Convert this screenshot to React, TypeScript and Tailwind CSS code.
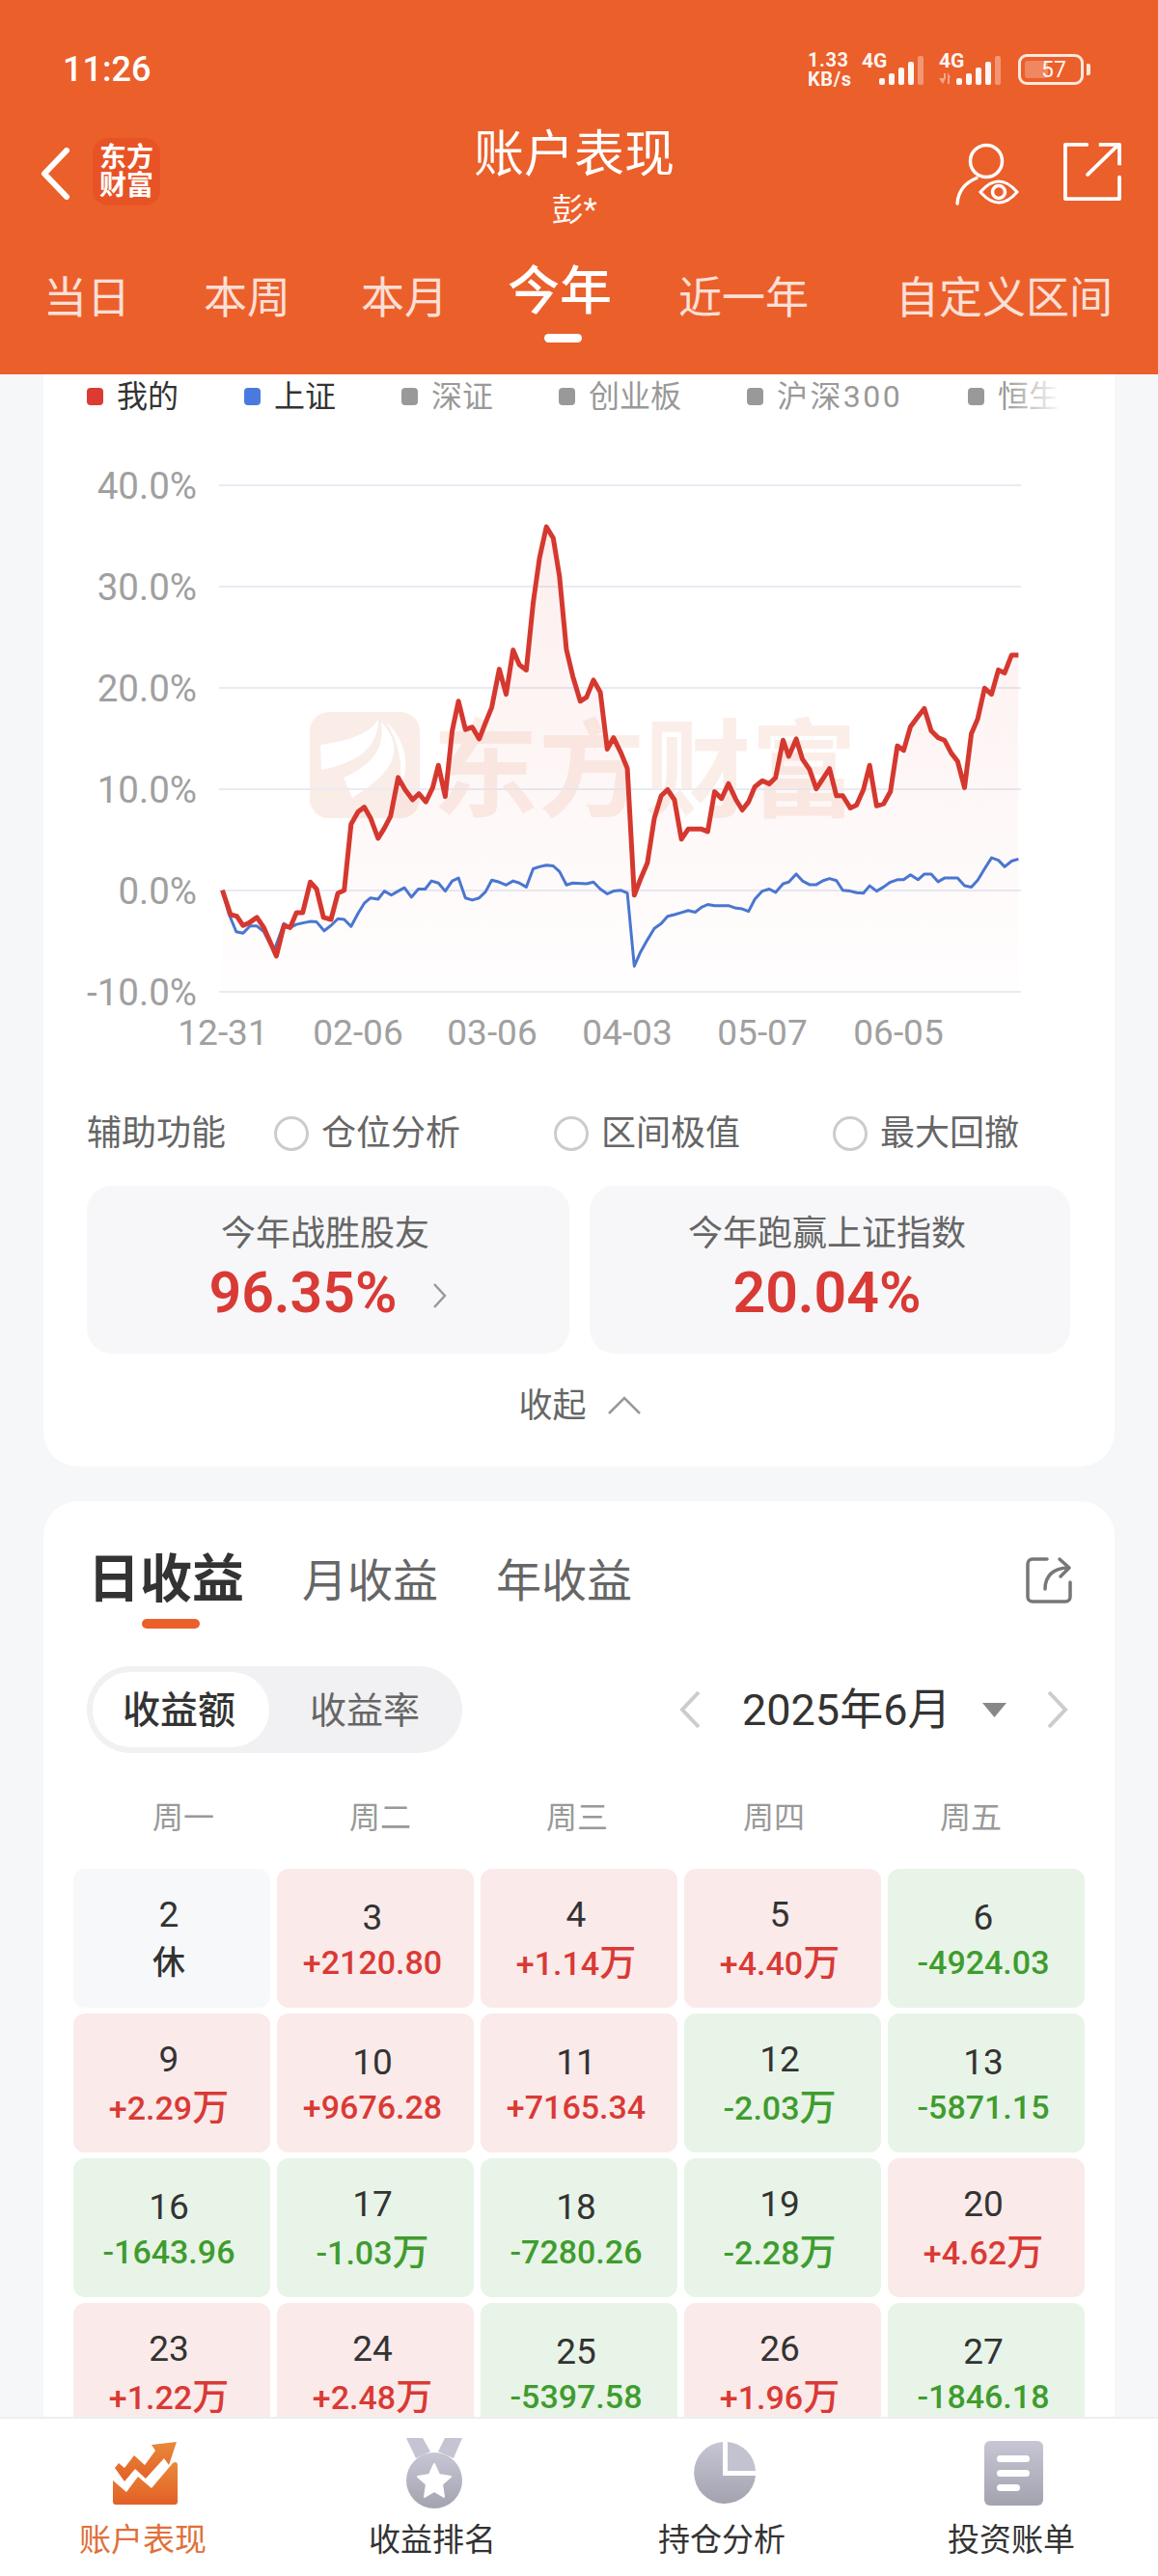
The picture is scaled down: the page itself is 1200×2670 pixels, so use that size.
import React from "react";

const redPts = [[262,1148],[275,1208],[285,1212],[295,1235],[305,1228],[317,1215],[328,1240],[348,1310],[360,1235],[370,1240],[380,1203],[390,1203],[402,1128],[412,1145],[423,1215],[435,1220],[446,1155],[456,1148],[467,985],[478,955],[488,943],[498,970],[510,1020],[520,995],[530,965],[542,870],[553,900],[565,925],[575,910],[586,930],[597,895],[606,840],[617,917],[628,755],[638,682],[649,752],[660,746],[671,775],[681,735],[691,697],[703,603],[714,665],[725,556],[735,592],[746,605],[757,440],[767,330],[778,252],[789,280],[799,375],[810,555],[820,620],[832,682],[842,672],[853,630],[864,660],[875,800],[885,772],[897,810],[907,848],[918,1160],[928,1120],[939,1080],[950,970],[961,915],[971,900],[982,925],[993,1022],[1004,997],[1025,997],[1035,1003],[1046,905],[1057,922],[1068,885],[1080,925],[1090,950],[1100,930],[1110,893],[1122,878],[1133,886],[1143,870],[1155,778],[1164,818],[1176,775],[1186,825],[1197,850],[1208,898],[1229,848],[1240,915],[1250,915],[1262,945],[1272,938],[1283,900],[1293,840],[1304,940],[1315,935],[1326,905],[1337,792],[1347,803],[1358,745],[1370,720],[1380,700],[1391,755],[1402,772],[1412,778],[1423,810],[1433,830],[1444,895],[1455,762],[1465,725],[1476,650],[1487,665],[1498,605],[1508,612],[1519,568],[1530,568]];

const bluePts = [[262,1148],[272,1205],[284,1250],[295,1254],[306,1236],[317,1236],[328,1250],[338,1280],[346,1290],[360,1230],[370,1240],[380,1232],[392,1228],[402,1225],[412,1226],[424,1248],[435,1235],[446,1218],[456,1220],[467,1237],[478,1205],[488,1180],[498,1167],[510,1170],[520,1150],[531,1160],[542,1150],[552,1142],[563,1165],[574,1145],[585,1145],[595,1125],[606,1130],[617,1150],[628,1125],[638,1118],[649,1167],[660,1172],[671,1167],[681,1152],[691,1123],[703,1128],[714,1135],[725,1125],[735,1130],[746,1140],[757,1095],[767,1090],[778,1086],[789,1088],[799,1102],[810,1135],[820,1130],[842,1132],[853,1128],[864,1145],[875,1157],[885,1150],[897,1148],[907,1155],[918,1335],[928,1300],[939,1270],[950,1242],[961,1230],[971,1212],[982,1208],[993,1203],[1004,1198],[1015,1202],[1025,1190],[1035,1183],[1046,1186],[1068,1186],[1080,1192],[1090,1194],[1100,1200],[1110,1170],[1122,1150],[1133,1145],[1143,1153],[1155,1132],[1164,1128],[1176,1108],[1186,1125],[1197,1134],[1208,1134],[1219,1124],[1229,1119],[1240,1124],[1250,1148],[1262,1150],[1272,1154],[1283,1155],[1293,1137],[1304,1150],[1315,1140],[1326,1128],[1337,1122],[1347,1122],[1358,1110],[1370,1122],[1380,1108],[1391,1108],[1402,1127],[1412,1118],[1433,1118],[1444,1137],[1455,1140],[1465,1123],[1476,1095],[1487,1068],[1498,1074],[1508,1090],[1519,1076],[1530,1071]];

// traced points -> page coordinates
const toLine = (pts: number[][]) =>
  pts.map(([x, y]) => `${(60 + x / 1.537).toFixed(1)},${(440 + y / 2.378).toFixed(1)}`).join(" ");

const tabs = [
  { label: "当日", cls: "ml-[45px]" },
  { label: "本周", cls: "ml-[76px]" },
  { label: "本月", cls: "ml-[73px]" },
  { label: "今年", cls: "ml-[62px]", active: true },
  { label: "近一年", cls: "ml-[69px]" },
  { label: "自定义区间", cls: "ml-[90px]" },
];

const legend = [
  { label: "我的", box: "bg-[#dd3a32]", text: "text-[#333]" },
  { label: "上证", box: "bg-[#4a7ae0]", text: "text-[#333]" },
  { label: "深证", box: "bg-[#999]", text: "text-[#999]" },
  { label: "创业板", box: "bg-[#999]", text: "text-[#999]" },
  { label: "沪深300", box: "bg-[#999]", text: "text-[#999] tracking-[2.4px]" },
  { label: "恒生", box: "bg-[#999]", text: "text-[#999]" },
];

const yLabels = [
  { t: "40.0%", y: 503 },
  { t: "30.0%", y: 608 },
  { t: "20.0%", y: 713 },
  { t: "10.0%", y: 818 },
  { t: "0.0%", y: 923 },
  { t: "-10.0%", y: 1028 },
];

const xLabels = [
  { t: "12-31", x: 231 },
  { t: "02-06", x: 371 },
  { t: "03-06", x: 510 },
  { t: "04-03", x: 650 },
  { t: "05-07", x: 790 },
  { t: "06-05", x: 931 },
];

const days = [
  { d: 2, v: "休" }, { d: 3, v: "+2120.80" }, { d: 4, v: "+1.14万" }, { d: 5, v: "+4.40万" }, { d: 6, v: "-4924.03" },
  { d: 9, v: "+2.29万" }, { d: 10, v: "+9676.28" }, { d: 11, v: "+7165.34" }, { d: 12, v: "-2.03万" }, { d: 13, v: "-5871.15" },
  { d: 16, v: "-1643.96" }, { d: 17, v: "-1.03万" }, { d: 18, v: "-7280.26" }, { d: 19, v: "-2.28万" }, { d: 20, v: "+4.62万" },
  { d: 23, v: "+1.22万" }, { d: 24, v: "+2.48万" }, { d: 25, v: "-5397.58" }, { d: 26, v: "+1.96万" }, { d: 27, v: "-1846.18" },
];

function Signal({ arrows }: { arrows?: boolean }) {
  const bars = [
    { x: 18, h: 7 }, { x: 28, h: 12 }, { x: 38, h: 18 }, { x: 48, h: 24 },
  ];
  return (
    <svg width="66" height="44" viewBox="0 -4 66 44" className="block">
      <text x="0" y="16" fontSize="21" fontWeight="700" fill="#fff" fillOpacity="0.95">4G</text>
      {arrows && (
        <g fill="#fff" fillOpacity="0.45">
          <path d="M0 27h5v-5h2v5h-0l-3 6z" />
          <path d="M9 21l3 5h-1v7H9z" />
        </g>
      )}
      {bars.map((b) => (
        <rect key={b.x} x={b.x} y={34 - b.h} width="6" height={b.h} rx="2" fill="#fff" fillOpacity="0.95" />
      ))}
      <rect x="58" y="4" width="6" height="30" rx="2" fill="#fff" fillOpacity="0.35" />
    </svg>
  );
}

function StatusBar() {
  return (
    <div className="flex h-[40px] items-center justify-between mt-[52px] pl-[65px] pr-[70px] text-white">
      <span className="text-[36px] font-medium leading-none">11:26</span>
      <div className="flex items-center">
        <div className="flex w-[56px] flex-col text-[20px] font-bold leading-[20px] tracking-[0.6px] text-white/95">
          <span>1.33</span>
          <span>KB/s</span>
        </div>
        <Signal />
        <div className="ml-[14px]"><Signal arrows /></div>
        <div className="ml-[16px] flex items-center">
          <div className="relative flex h-[32px] w-[68px] items-center justify-center overflow-hidden rounded-[9px] border-[3px] border-white/85">
            <div className="absolute left-[4px] top-[4px] bottom-[4px] w-[24px] rounded-[3px] bg-white/25" />
            <span className="relative pl-[6px] text-[23px] leading-none text-white/95">57</span>
          </div>
          <div className="ml-[3px] h-[12px] w-[4px] rounded-r-[2px] bg-white/85" />
        </div>
      </div>
    </div>
  );
}

function HeaderNav() {
  return (
    <div className="mt-[36px] grid h-[112px] grid-cols-[1fr_auto_1fr] pr-[10px]">
      <div className="flex items-start pt-[15px] pl-[40px]">
        <svg width="34" height="54" viewBox="0 0 34 54" fill="none" className="mt-[10px]">
          <path d="M29 3L6 27l23 24" stroke="#fff" strokeWidth="6" strokeLinecap="round" strokeLinejoin="round" />
        </svg>
        <div className="ml-[22px] flex h-[70px] w-[70px] flex-col items-center justify-center rounded-[16px] bg-[#e85326] text-[28px] font-bold leading-[29px] text-white">
          <span>东方</span>
          <span>财富</span>
        </div>
      </div>
      <div className="flex flex-col items-center pt-[5px] text-white">
        <span className="text-[52px] leading-[56px]">账户表现</span>
        <span className="mt-[9px] text-[33px] leading-[40px] text-white/95">彭*</span>
      </div>
      <div className="flex items-start justify-end pt-[20px] pr-[28px]">
        <svg width="68" height="66" viewBox="0 0 68 66" fill="none" stroke="#fff" strokeWidth="3.5" strokeLinecap="round">
          <circle cx="33" cy="19" r="16.5" />
          <path d="M3 63C4 50 12 41 23 36.500" />
          <path d="M27 51Q46 29 65 51Q46 73 27 51Z" strokeWidth="3" />
          <circle cx="46" cy="51" r="6.500" strokeWidth="3.500" />
        </svg>
        <svg width="60" height="60" viewBox="0 0 62 62" fill="none" stroke="#fff" strokeWidth="4" strokeLinecap="round" strokeLinejoin="round" className="ml-[45px]">
          <path d="M25 2H2V60H60V37" />
          <path d="M26 34L59 2" />
          <path d="M38 2H60V24" strokeLinecap="butt" />
        </svg>
      </div>
    </div>
  );
}

function PeriodTabs() {
  return (
    <div className="mt-[38px] flex h-[64px] items-center whitespace-nowrap">
      {tabs.map((t) =>
        t.active ? (
          <div key={t.label} className={`relative mb-[14px] text-[54px] font-medium leading-[56px] text-white ${t.cls}`}>
            {t.label}
            <div className="absolute left-[38px] top-[71px] h-[9px] w-[39px] rounded-full bg-white" />
          </div>
        ) : (
          <div key={t.label} className={`text-[45px] leading-[56px] text-white/80 ${t.cls}`}>
            {t.label}
          </div>
        )
      )}
    </div>
  );
}

function Legend() {
  return (
    <div className="relative h-[46px] w-[1056px] overflow-hidden pl-[45px]">
      <div className="flex h-full items-center gap-[68px] whitespace-nowrap">
        {legend.map((l) => (
          <div key={l.label} className="flex items-center gap-[14px]">
            <div className={`h-[18px] w-[17px] rounded-[4px] ${l.box}`} />
            <span className={`text-[32px] leading-none ${l.text}`}>{l.label}</span>
          </div>
        ))}
      </div>
      <div className="absolute right-0 top-0 h-full w-[60px] bg-gradient-to-r from-white/0 to-white" />
    </div>
  );
}

function Chart() {
  const red = toLine(redPts);
  const blue = toLine(bluePts);
  return (
    <svg viewBox="45 434 1110 666" className="block h-[666px] w-[1110px]">
      <defs>
        <linearGradient id="areaFill" gradientUnits="userSpaceOnUse" x1="0" y1="540" x2="0" y2="1040">
          <stop offset="0" stopColor="#e2453c" stopOpacity="0.09" />
          <stop offset="1" stopColor="#e2453c" stopOpacity="0.005" />
        </linearGradient>
      </defs>
      {/* watermark */}
      <rect x="321" y="738" width="114" height="110" rx="20" fill="#faece6" />
      <path d="M332 772C360 768 385 760 392 745C392 775 372 790 333 798Z" fill="#fff" />
      <path d="M356 806C380 795 400 780 395 748C420 775 410 800 365 827Z" fill="#fff" />
      <path d="M400 748C422 768 425 795 414 822C418 795 414 770 400 748Z" fill="#fff" />
      <text x="448" y="838" fontSize="110" fontWeight="700" fill="#fbeee8">东方财富</text>

      {yLabels.map((l) => (
        <g key={l.t}>
          <line x1="227" x2="1058" y1={l.y} y2={l.y} stroke="#e9ebf3" strokeWidth="2" />
          <text x="204" y={l.y + 14} textAnchor="end" fontSize="38.5" fill="#a0a0a0">{l.t}</text>
        </g>
      ))}
      {xLabels.map((l) => (
        <text key={l.t} x={l.x} y="1083" textAnchor="middle" fontSize="37" fill="#a0a0a0">{l.t}</text>
      ))}

      <polygon points={`230,1028 ${red} 1055,1028`} fill="url(#areaFill)" />
      <polyline points={blue} fill="none" stroke="#4a76d0" strokeWidth="3" strokeLinejoin="round" />
      <polyline points={red} fill="none" stroke="#d5382f" strokeWidth="5" strokeLinejoin="round" />
    </svg>
  );
}

function Radio({ label, cls }: { label: string; cls: string }) {
  return (
    <div className={`flex items-center ${cls}`}>
      <div className="h-[36px] w-[36px] rounded-full border-[3px] border-[#ccc]" />
      <span className="ml-[13px] text-[36px] leading-none text-[#666]">{label}</span>
    </div>
  );
}

function ChartCard() {
  return (
    <section className="mx-[45px] rounded-b-[36px] bg-white pb-[45px]">
      <Legend />
      <Chart />
      <div className="mt-[57px] mb-[-1px] flex h-[36px] items-center pl-[45px]">
        <span className="text-[36px] leading-none text-[#666]">辅助功能</span>
        <Radio label="仓位分析" cls="ml-[50px]" />
        <Radio label="区间极值" cls="ml-[97px]" />
        <Radio label="最大回撤" cls="ml-[96px]" />
      </div>
      <div className="mt-[37px] flex gap-[21px] pl-[45px]">
        <div className="flex h-[174px] w-[500px] flex-col items-center rounded-[26px] bg-[#f7f7f9] pt-[30px] pr-[6px]">
          <span className="text-[36px] leading-[40px] text-[#666]">今年战胜股友</span>
          <div className="mt-[9px] flex items-center pl-[6px]">
            <span className="text-[59px] font-semibold leading-[64px] text-[#d93a35]">96.35%</span>
            <svg width="16" height="28" viewBox="0 0 16 28" fill="none" className="ml-[36px] mt-[6px]">
              <path d="M2 2l11 12L2 26" stroke="#999" strokeWidth="2.500" />
            </svg>
          </div>
        </div>
        <div className="flex h-[174px] w-[498px] flex-col items-center rounded-[26px] bg-[#f7f7f9] pt-[30px] pr-[6px]">
          <span className="text-[36px] leading-[40px] text-[#666]">今年跑赢上证指数</span>
          <span className="mt-[9px] text-[59px] font-semibold leading-[64px] text-[#d93a35]">20.04%</span>
        </div>
      </div>
      <div className="mt-[36px] flex h-[36px] items-center justify-center pl-[2px]">
        <span className="text-[35px] leading-none text-[#666]">收起</span>
        <svg width="36" height="20" viewBox="0 0 36 20" fill="none" className="ml-[21px]">
          <path d="M2 18L18 2l16 16" stroke="#999" strokeWidth="2.500" />
        </svg>
      </div>
    </section>
  );
}

function DayCell({ d, v }: { d: number; v: string }) {
  const rest = v === "休";
  const up = v.startsWith("+");
  const isWan = v.endsWith("万");
  const high = isWan || rest;
  const bg = rest ? "bg-[#f7f8fa]" : up ? "bg-[#fbeaea]" : "bg-[#e8f4e7]";
  const color = rest ? "text-[#333]" : up ? "text-[#d93a35]" : "text-[#3f9c2f]";
  return (
    <div className={`flex h-[144px] flex-col items-center justify-center rounded-[12px] pr-[6px] ${bg}`}>
      <div className={`h-[40px] text-[37px] text-[#333] ${high ? "pt-[2px] leading-[38px]" : "pt-[8px] leading-[32px]"}`}>{d}</div>
      <div className={`mt-[10px] h-[40px] text-[34px] font-medium leading-[40px] ${color}`}>
        {isWan ? (
          <>
            {v.slice(0, -1)}
            <span className="text-[38px]">万</span>
          </>
        ) : (
          v
        )}
      </div>
    </div>
  );
}

function CalendarCard() {
  return (
    <section className="mx-[45px] mt-[36px] rounded-[36px] bg-white pt-[52px] pb-[40px]">
      <div className="flex h-[60px] items-center pl-[46px] pr-[44px]">
        <span className="text-[54px] font-semibold leading-none text-[#333]">日收益</span>
        <span className="ml-[60px] text-[47px] leading-none text-[#666]">月收益</span>
        <span className="ml-[60px] text-[47px] leading-none text-[#666]">年收益</span>
        <svg width="48" height="50" viewBox="0 0 48 50" fill="none" stroke="#777" strokeWidth="3.500" strokeLinecap="round" strokeLinejoin="round" className="ml-auto">
          <path d="M22 3H7C4 3 2 5 2 8V42C2 45 4 47 7 47H41C44 47 46 45 46 42V27" />
          <path d="M20 34C20 21 28 12 44 12" />
          <path d="M35 3L45 12L36 21" />
        </svg>
      </div>
      <div className="ml-[102px] mt-[10px] h-[10px] w-[60px] rounded-full bg-[#eb5f2b]" />
      <div className="mt-[39px] flex items-center pl-[45px] pr-[40px]">
        <div className="flex h-[90px] w-[389px] items-center rounded-full bg-[#f1f1f3] pl-[6px]">
          <div className="flex h-[78px] w-[183px] items-center justify-center rounded-full bg-white pt-[2px] pr-[4px] text-[39px] font-medium text-[#333]">收益额</div>
          <div className="flex w-[194px] items-center justify-center pt-[2px] pl-[4px] text-[38px] text-[#666]">收益率</div>
        </div>
        <svg width="24" height="40" viewBox="0 0 24 40" fill="none" className="ml-[224px]">
          <path d="M21 2L4 20l17 18" stroke="#ccc" strokeWidth="4" />
        </svg>
        <span className="ml-[42px] text-[45px] leading-none text-[#333]">2025年6月</span>
        <svg width="25" height="15" viewBox="0 0 25 15" className="ml-[33px]">
          <path d="M0 0h25L12.500 15z" fill="#888" />
        </svg>
        <svg width="24" height="40" viewBox="0 0 24 40" fill="none" className="ml-[41px]">
          <path d="M3 2l17 18L3 38" stroke="#ccc" strokeWidth="4" />
        </svg>
      </div>
      <div className="ml-[43px] mt-[48px] grid h-[38px] w-[1020px] grid-cols-5 items-center text-center text-[32px] leading-none text-[#999]">
        <span>周一</span>
        <span>周二</span>
        <span>周三</span>
        <span>周四</span>
        <span>周五</span>
      </div>
      <div className="ml-[31px] mt-[34px] grid w-[1048px] grid-cols-5 gap-x-[7px] gap-y-[6px]">
        {days.map((c) => (
          <DayCell key={c.d} d={c.d} v={c.v} />
        ))}
      </div>
    </section>
  );
}

function NavIconAccount() {
  return (
    <svg width="67" height="66" viewBox="0 0 67 66">
      <defs>
        <linearGradient id="navOrange" x1="0" y1="0" x2="0" y2="1">
          <stop offset="0" stopColor="#e88a3a" />
          <stop offset="1" stopColor="#e35f26" />
        </linearGradient>
      </defs>
      <g fill="url(#navOrange)">
        <path d="M0 40L14 52L26 36L40 48L62 22C65 20 67 21 67 24V62C67 64 66 65 64 65H3C1 65 0 64 0 62Z" />
        <path d="M2 27L6 22L12 27L22 14L33 24L44 9L40 3L66 0L58 24L53 17L34 38L23 28L12 41Z" />
      </g>
    </svg>
  );
}

function NavIconMedal() {
  return (
    <svg width="60" height="73" viewBox="0 0 60 73">
      <defs>
        <linearGradient id="navGrayA" x1="0" y1="0" x2="0" y2="1">
          <stop offset="0" stopColor="#c6c6d4" />
          <stop offset="1" stopColor="#a3a3b0" />
        </linearGradient>
      </defs>
      <path d="M1 0H18L26 14L11 21Z M41 0H59L50 21L34 14Z" fill="#c4c4d2" />
      <circle cx="30" cy="44" r="29" fill="url(#navGrayA)" />
      <path d="M30 27L35 38L47 40L38 48L40 61L30 55L20 61L22 48L13 40L25 38Z" fill="#fff" stroke="#fff" strokeWidth="2" strokeLinejoin="round" />
    </svg>
  );
}

function NavIconPie() {
  return (
    <svg width="65" height="67" viewBox="0 0 65 67">
      <defs>
        <linearGradient id="navGrayB" x1="0" y1="0" x2="0" y2="1">
          <stop offset="0" stopColor="#c6c6d4" />
          <stop offset="1" stopColor="#a3a3b0" />
        </linearGradient>
      </defs>
      <path d="M31 1A32 32 0 1 0 65 36H31Z" fill="url(#navGrayB)" />
      <path d="M36 1A32 32 0 0 1 65 31H36Z" fill="#c2c2d0" />
    </svg>
  );
}

function NavIconDoc() {
  return (
    <svg width="61" height="67" viewBox="0 0 61 67">
      <defs>
        <linearGradient id="navGrayC" x1="0" y1="0" x2="0" y2="1">
          <stop offset="0" stopColor="#c6c6d4" />
          <stop offset="1" stopColor="#a3a3b0" />
        </linearGradient>
      </defs>
      <rect width="61" height="67" rx="6" fill="url(#navGrayC)" />
      <rect x="13" y="15" width="34" height="7" rx="3.500" fill="#fff" />
      <rect x="13" y="30" width="34" height="7" rx="3.500" fill="#fff" />
      <rect x="13" y="45" width="24" height="7" rx="3.500" fill="#fff" />
    </svg>
  );
}

function BottomNav() {
  return (
    <nav className="grid h-[165px] shrink-0 grid-cols-4 border-t-2 border-[#eeeeee] bg-white">
      <div className="flex flex-col items-center pt-[20px]">
        <div className="flex h-[73px] items-center"><NavIconAccount /></div>
        <span className="mt-[13px] pr-[4px] text-[33px] leading-[40px] text-[#e0703a]">账户表现</span>
      </div>
      <div className="flex flex-col items-center pt-[20px]">
        <div className="flex h-[73px] items-center"><NavIconMedal /></div>
        <span className="mt-[13px] pr-[4px] text-[33px] leading-[40px] text-[#333]">收益排名</span>
      </div>
      <div className="flex flex-col items-center pt-[20px]">
        <div className="flex h-[73px] items-center"><NavIconPie /></div>
        <span className="mt-[13px] pr-[4px] text-[33px] leading-[40px] text-[#333]">持仓分析</span>
      </div>
      <div className="flex flex-col items-center pt-[20px]">
        <div className="flex h-[73px] items-center"><NavIconDoc /></div>
        <span className="mt-[13px] pr-[4px] text-[33px] leading-[40px] text-[#333]">投资账单</span>
      </div>
    </nav>
  );
}

export default function App() {
  return (
    <div className="flex h-[2670px] w-[1200px] flex-col overflow-hidden bg-[#f6f7f9] [font-family:Roboto,'Noto_Sans_CJK_SC',sans-serif]">
      <header className="h-[388px] shrink-0 overflow-hidden bg-[#eb5f2b]">
        <StatusBar />
        <HeaderNav />
        <PeriodTabs />
      </header>
      <main className="min-h-0 flex-1 overflow-hidden">
        <ChartCard />
        <CalendarCard />
      </main>
      <BottomNav />
    </div>
  );
}
